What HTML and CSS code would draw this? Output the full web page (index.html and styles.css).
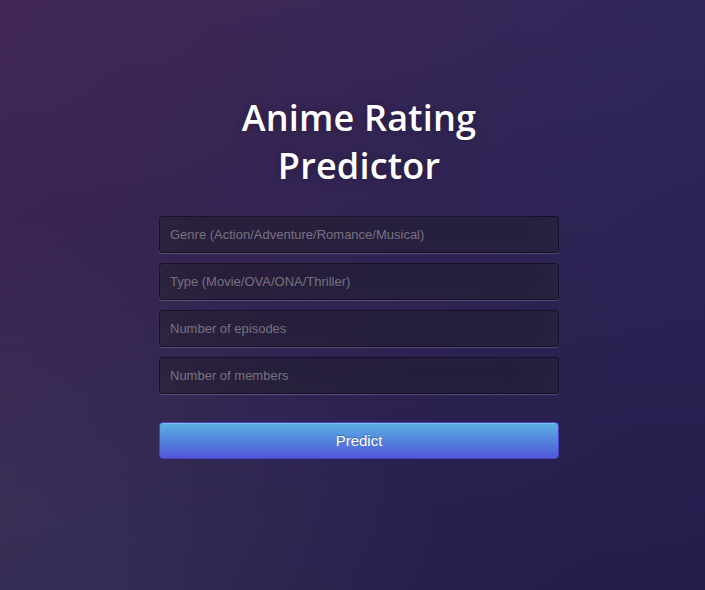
FILE: index.html
```html
<!DOCTYPE html>
<html lang="en">
<head>
<meta charset="utf-8">
<title>Anime Rating Predictor</title>
<link rel="stylesheet" href="styles.css">
</head>
<body>
<main class="login">
  <h1 class="title">Anime Rating<br>Predictor</h1>
  <form class="form">
    <div class="fields">
      <input class="field" type="text" placeholder="Genre (Action/Adventure/Romance/Musical)">
      <input class="field" type="text" placeholder="Type (Movie/OVA/ONA/Thriller)">
      <input class="field" type="text" placeholder="Number of episodes">
      <input class="field" type="text" placeholder="Number of members">
    </div>
    <button class="btn" type="submit">Predict</button>
  </form>
</main>
</body>
</html>
```
FILE: styles.css
```css
html, body {
  margin: 0;
  height: 100%;
  overflow: hidden;
}
body {
  font-family: "Open Sans", sans-serif;
  color: #fff;
  background:
    radial-gradient(ellipse at 0% 100%, rgba(104,128,138,0.14) 10%, rgba(104,128,138,0) 45%),
    linear-gradient(to bottom, rgba(70,80,160,0.12) 0%, rgba(0,0,0,0.06) 100%),
    linear-gradient(135deg, #41234a 0%, #2f2150 50%, #241f50 100%);
}
.login {
  width: 400px;
  margin: 0 0 0 159px;
  padding-top: 94px;
}
.title {
  margin: 0 0 26px;
  font-size: 36px;
  font-weight: 600;
  line-height: 48px;
  letter-spacing: 0.2px;
  text-align: center;
  text-shadow: 0 0 10px rgba(0,0,0,0.3);
}
.form {
  display: flex;
  flex-direction: column;
  gap: 28px;
}
.fields {
  display: flex;
  flex-direction: column;
  gap: 10px;
}
.field {
  box-sizing: border-box;
  width: 100%;
  height: 37px;
  margin: 0;
  padding: 10px;
  font-family: "Liberation Sans", Arial, sans-serif;
  font-size: 13px;
  color: #fff;
  background: rgba(0,0,0,0.3);
  border: 1px solid rgba(0,0,0,0.3);
  border-radius: 4px;
  outline: none;
  box-shadow: inset 0 -5px 45px rgba(100,100,100,0.2), 0 1px 1px rgba(255,255,255,0.2);
}
.field::placeholder {
  color: #77727f;
}
.btn {
  box-sizing: border-box;
  width: 100%;
  height: 37px;
  margin: 0;
  padding: 0;
  font-family: "Liberation Sans", Arial, sans-serif;
  font-size: 15px;
  color: #fff;
  text-shadow: 0 -1px 1px rgba(0,0,0,0.25);
  background: linear-gradient(to bottom, #5ab2e4 0%, #5056d7 100%);
  border: 1px solid #4a42c8;
  border-radius: 4px;
  box-shadow: inset 0 1px 0 rgba(255,255,255,0.2), 0 1px 2px rgba(0,0,0,0.05);
  cursor: pointer;
}
```
